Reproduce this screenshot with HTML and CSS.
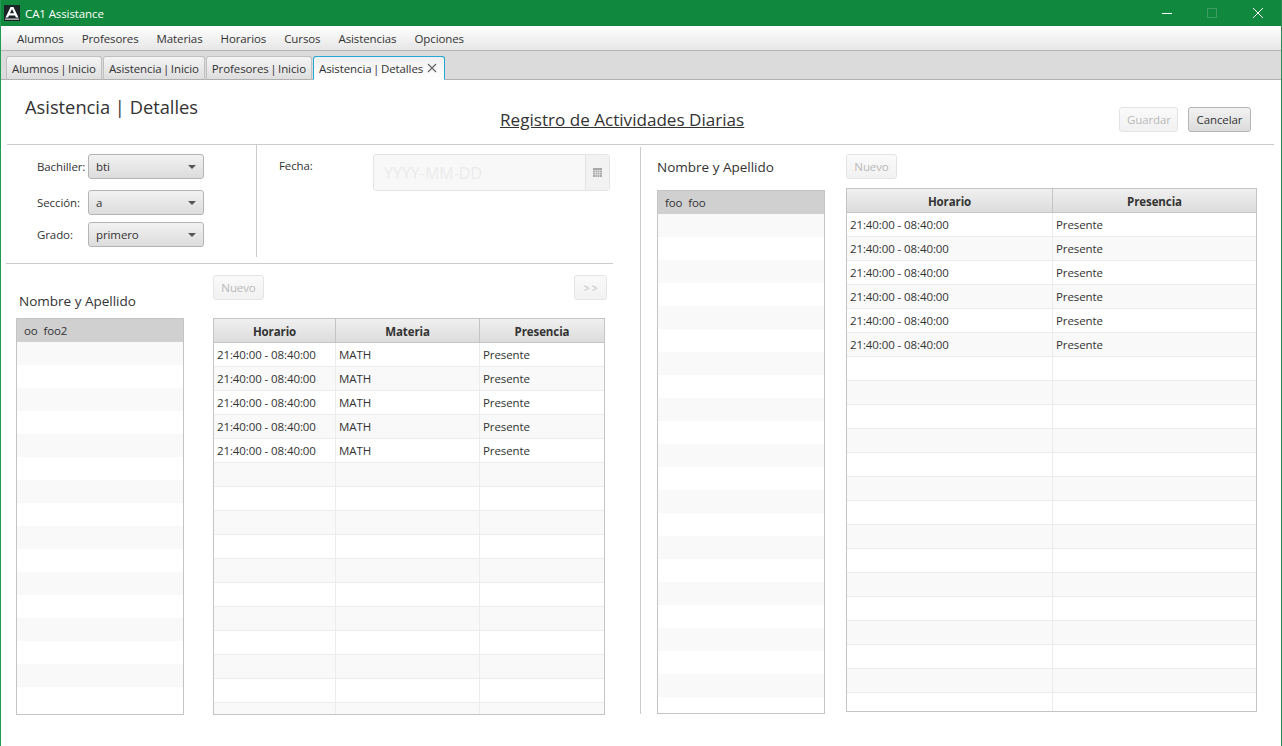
FILE: index.html
```html
<!DOCTYPE html>
<html lang="es">
<head>
<meta charset="utf-8">
<title>CA1 Assistance</title>
<link rel="stylesheet" href="styles.css">
</head>
<body>
<div class="window">
  <header class="titlebar">
    <svg class="logo" width="16" height="16" viewBox="0 0 16 16"><rect width="16" height="16" fill="#1c2326"/><path d="M1.5 12.5 6.6 2h2.8l5.1 10.5h-2.6l-.9-2.1H5l-.9 2.1zM5.9 8.3h4.2L8 3.9z" fill="#fff"/><rect x="1" y="13.6" width="14" height="1" fill="#fff"/></svg>
    <span class="app-name">CA1 Assistance</span>
    <div class="win-controls">
      <svg width="46" height="26" viewBox="0 0 46 26"><path d="M19 13.5h10" stroke="#fff" stroke-width="1"/></svg>
      <svg width="46" height="26" viewBox="0 0 46 26"><rect x="18.5" y="8.5" width="9" height="9" fill="none" stroke="#3a9d62"/></svg>
      <svg width="46" height="26" viewBox="0 0 46 26"><path d="M18 8l10 10M28 8 18 18" stroke="#fff" stroke-width="1"/></svg>
    </div>
  </header>
  <nav class="menubar">
    <span>Alumnos</span><span>Profesores</span><span>Materias</span><span>Horarios</span><span>Cursos</span><span>Asistencias</span><span>Opciones</span>
  </nav>
  <div class="tabbar">
    <div class="tab">Alumnos | Inicio</div>
    <div class="tab">Asistencia | Inicio</div>
    <div class="tab">Profesores | Inicio</div>
    <div class="tab tab-active">Asistencia | Detalles
      <svg width="10" height="10" viewBox="0 0 10 10"><path d="M1 1l8 8M9 1 1 9" stroke="#666" stroke-width="1.2"/></svg>
    </div>
  </div>
  <main class="content">
    <section class="page-head">
      <h1 class="page-title">Asistencia | Detalles</h1>
      <h2 class="page-sub">Registro de Actividades Diarias</h2>
      <div class="head-actions">
        <button class="btn btn-off btn-save">Guardar</button>
        <button class="btn btn-cancel">Cancelar</button>
      </div>
    </section>
    <section class="panes">
      <div class="pane-left">
        <div class="filters">
          <div class="filter-col">
            <div class="field field-a"><label>Bachiller:</label><div class="combo">bti</div></div>
            <div class="field field-b"><label>Sección:</label><div class="combo">a</div></div>
            <div class="field field-c"><label>Grado:</label><div class="combo">primero</div></div>
          </div>
          <div class="date-col">
            <label>Fecha:</label>
            <div class="datepicker">
              <span class="date-input">YYYY-MM-DD</span>
              <span class="date-btn"><svg width="9" height="9" viewBox="0 0 9 9"><rect width="9" height="9" fill="#a8a8a8"/><path d="M0 2.5h9M0 4.5h9M0 6.5h9M2.5 2v7M4.5 2v7M6.5 2v7" stroke="#e8e8e8" stroke-width=".6"/></svg></span>
            </div>
          </div>
        </div>
        <div class="lower">
          <div class="people">
            <div class="list-title list-title-l">Nombre y Apellido</div>
            <div class="list list-l">
              <div class="sel">oo&nbsp; foo2</div>
              <div></div><div></div><div></div><div></div><div></div><div></div><div></div><div></div><div></div><div></div><div></div><div></div><div></div><div></div><div></div><div></div>
            </div>
          </div>
          <div class="records">
            <div class="toolbar">
              <button class="btn btn-off btn-new">Nuevo</button>
              <button class="btn btn-off btn-next">&gt; &gt;</button>
            </div>
            <div class="table table-l">
              <div class="thead"><b>Horario</b><b>Materia</b><b>Presencia</b></div>
              <div class="tr"><span>21:40:00 - 08:40:00</span><span>MATH</span><span>Presente</span></div>
              <div class="tr"><span>21:40:00 - 08:40:00</span><span>MATH</span><span>Presente</span></div>
              <div class="tr"><span>21:40:00 - 08:40:00</span><span>MATH</span><span>Presente</span></div>
              <div class="tr"><span>21:40:00 - 08:40:00</span><span>MATH</span><span>Presente</span></div>
              <div class="tr"><span>21:40:00 - 08:40:00</span><span>MATH</span><span>Presente</span></div>
              <div class="tr"><span></span><span></span><span></span></div>
              <div class="tr"><span></span><span></span><span></span></div>
              <div class="tr"><span></span><span></span><span></span></div>
              <div class="tr"><span></span><span></span><span></span></div>
              <div class="tr"><span></span><span></span><span></span></div>
              <div class="tr"><span></span><span></span><span></span></div>
              <div class="tr"><span></span><span></span><span></span></div>
              <div class="tr"><span></span><span></span><span></span></div>
              <div class="tr"><span></span><span></span><span></span></div>
              <div class="tr"><span></span><span></span><span></span></div>
              <div class="tr"><span></span><span></span><span></span></div>
            </div>
          </div>
        </div>
      </div>
      <div class="vrule"></div>
      <div class="pane-right">
        <div class="people">
          <div class="list-title list-title-r">Nombre y Apellido</div>
          <div class="list list-r">
            <div class="sel">foo&nbsp; foo</div>
            <div></div><div></div><div></div><div></div><div></div><div></div><div></div><div></div><div></div><div></div><div></div><div></div><div></div><div></div><div></div><div></div><div></div><div></div><div></div><div></div><div></div><div></div>
          </div>
        </div>
        <div class="records-r">
          <button class="btn btn-off btn-new">Nuevo</button>
          <div class="table table-r">
            <div class="thead"><b>Horario</b><b>Presencia</b></div>
            <div class="tr"><span>21:40:00 - 08:40:00</span><span>Presente</span></div>
            <div class="tr"><span>21:40:00 - 08:40:00</span><span>Presente</span></div>
            <div class="tr"><span>21:40:00 - 08:40:00</span><span>Presente</span></div>
            <div class="tr"><span>21:40:00 - 08:40:00</span><span>Presente</span></div>
            <div class="tr"><span>21:40:00 - 08:40:00</span><span>Presente</span></div>
            <div class="tr"><span>21:40:00 - 08:40:00</span><span>Presente</span></div>
            <div class="tr"><span></span><span></span></div>
            <div class="tr"><span></span><span></span></div>
            <div class="tr"><span></span><span></span></div>
            <div class="tr"><span></span><span></span></div>
            <div class="tr"><span></span><span></span></div>
            <div class="tr"><span></span><span></span></div>
            <div class="tr"><span></span><span></span></div>
            <div class="tr"><span></span><span></span></div>
            <div class="tr"><span></span><span></span></div>
            <div class="tr"><span></span><span></span></div>
            <div class="tr"><span></span><span></span></div>
            <div class="tr"><span></span><span></span></div>
            <div class="tr"><span></span><span></span></div>
            <div class="tr"><span></span><span></span></div>
            <div class="tr"><span></span><span></span></div>
          </div>
        </div>
      </div>
    </section>
  </main>
</div>
</body>
</html>
```
FILE: styles.css
```css
* { box-sizing: border-box; }
html, body { margin: 0; padding: 0; overflow: hidden; }
body { font-family: "Open Sans", "Liberation Sans", sans-serif; font-size: 11.5px; letter-spacing: -0.1px; color: #333; background: #fff; }
.window { width: 1282px; height: 746px; display: flex; flex-direction: column; border-left: 1px solid #1f9b54; border-right: 1px solid #2f8a55; overflow: hidden; }
.titlebar { height: 26px; margin: 0 -1px; flex: none; display: flex; align-items: center; background: #10893e; color: #fff; padding-left: 4px; }
.logo { flex: none; }
.app-name { margin-left: 5px; }
.win-controls { margin-left: auto; display: flex; margin-right: 1px; }
.win-controls svg { display: block; }
.menubar { height: 25px; flex: none; display: flex; align-items: center; padding-left: 7px; background: linear-gradient(#ffffff, #e6e6e6); border-bottom: 1px solid #b4b4b4; }
.menubar span { padding: 0 9px; color: #333; }
.tabbar { height: 29px; flex: none; display: flex; align-items: flex-end; gap: 1px; padding-left: 5px; background: #dbdbdb; border-bottom: 1px solid #b0b0b0; }
.tab { height: 24px; margin-bottom: -1px; padding: 0 5px; display: flex; align-items: center; gap: 4px; border: 1px solid #c0c0c0; border-bottom-color: #b0b0b0; border-radius: 3px 3px 0 0; background: linear-gradient(#f4f4f4, #dedede); white-space: nowrap; word-spacing: -1.3px; }
.tab-active { padding-right: 7px; background: linear-gradient(#f0f0f0, #fff); border-color: #22a7d6; border-bottom-color: #fff; }
.content { flex: 1; min-height: 0; display: flex; flex-direction: column; background: #fff; }
.page-head { height: 65px; flex: none; margin: 0 7px 0 6px; border-bottom: 1px solid #ccc; display: grid; grid-template-columns: 493px 1fr auto; }
.page-title { margin: 14px 0 0 18px; font-size: 18.3px; font-weight: 400; line-height: 26px; letter-spacing: 0; color: #333; grid-column: 1; }
.page-sub { margin: 28px 0 0; font-size: 17.1px; font-weight: 400; line-height: 24px; letter-spacing: 0; text-decoration: underline; grid-column: 2; }
.head-actions { margin: 27px 23px 0 0; display: flex; gap: 10px; grid-column: 3; align-items: flex-start; }
.btn { height: 25px; padding: 0 7px; font: inherit; letter-spacing: inherit; color: #333; border: 1px solid #b4b4b4; border-radius: 3px; background: linear-gradient(#f2f2f2, #dcdcdc); }
.btn-off { color: #b9b9b9; border-color: #e4e4e4; background: linear-gradient(#fafafa, #f1f1f1); }
.btn-save { width: 59px; }
.btn-cancel { width: 63px; }
.btn-new { width: 51px; }
.panes { flex: 1; min-height: 0; display: flex; padding-left: 5px; }
.pane-left { width: 607px; flex: none; display: flex; flex-direction: column; }
.filters { height: 119px; flex: none; display: flex; border-bottom: 1px solid #ccc; }
.filter-col { width: 251px; flex: none; height: 112px; border-right: 1px solid #ccc; padding: 9px 0 0 31px; display: flex; flex-direction: column; }
.field { display: flex; align-items: center; height: 25px; }
.field-b { margin-top: 11px; }
.field-c { margin-top: 7px; }
.field label { width: 51px; flex: none; }
.combo { width: 116px; height: 25px; line-height: 23px; padding-left: 7px; border: 1px solid #b4b4b4; border-radius: 3px; background: linear-gradient(#f2f2f2, #dcdcdc); position: relative; }
.combo::after { content: ""; position: absolute; right: 7px; top: 10px; border-left: 4px solid transparent; border-right: 4px solid transparent; border-top: 4px solid #555; }
.date-col { flex: 1; display: flex; align-items: flex-start; padding: 9px 0 0 22px; }
.date-col label { width: 94px; flex: none; line-height: 24px; }
.datepicker { width: 237px; height: 37px; display: flex; border: 1px solid #e4e4e4; border-radius: 3px; background: #f8f8f8; }
.date-input { flex: 1; padding-left: 10px; line-height: 36px; font-size: 16px; letter-spacing: 0; color: #ebebeb; }
.date-btn { width: 24px; display: flex; align-items: center; justify-content: center; border-left: 1px solid #e4e4e4; background: #f2f2f2; }
.lower { flex: 1; min-height: 0; display: flex; }
.people { width: 168px; flex: none; }
.lower .people { margin-left: 10px; }
.list-title { font-size: 13.5px; line-height: 20px; letter-spacing: 0; color: #333; }
.list-title-l { margin: 27px 0 7px 3px; }
.list-title-r { margin: 12px 0 13px 0; }
.list { border: 1px solid #c4c4c4; overflow: hidden; background: #fff; }
.list-l { height: 397px; }
.list-r { height: 524px; }
.list > div { height: 23px; line-height: 23px; padding-left: 7px; }
.list > div:nth-child(even) { background: #f9f9f9; }
.list > .sel { background: #d0d0d0; }
.records { margin-left: 29px; width: 394px; }
.toolbar { height: 54px; padding-top: 11px; display: flex; justify-content: space-between; align-items: flex-start; }
.btn-next { width: 33px; padding: 0; font-size: 10px; }
.table { border: 1px solid #c4c4c4; overflow: hidden; background: #fff; }
.table-l { width: 392px; height: 397px; }
.table-r { width: 411px; height: 524px; margin-top: 9px; }
.thead, .tr { display: grid; height: 24px; }
.table-l .thead, .table-l .tr { grid-template-columns: 122px 144px 1fr; }
.table-r .thead, .table-r .tr { grid-template-columns: 206px 1fr; }
.thead { background: linear-gradient(#f0f0f0, #dcdcdc); border-bottom: 1px solid #c4c4c4; }
.thead b { text-align: center; line-height: 25px; color: #333; font-weight: 700; border-right: 1px solid #c4c4c4; }
.thead b:last-child { border-right: 0; }
.tr { border-bottom: 1px solid #ececec; }
.tr:nth-child(odd) { background: #f9f9f9; }
.tr span { padding-left: 3px; line-height: 23px; border-right: 1px solid #ececec; }
.tr span:last-child { border-right: 0; }
.vrule { width: 1px; height: 567px; flex: none; margin: 2px 0 0 27px; background: #ccc; }
.pane-right { margin-left: 16px; display: flex; flex: none; }
.records-r { margin-left: 21px; padding-top: 9px; }
```
